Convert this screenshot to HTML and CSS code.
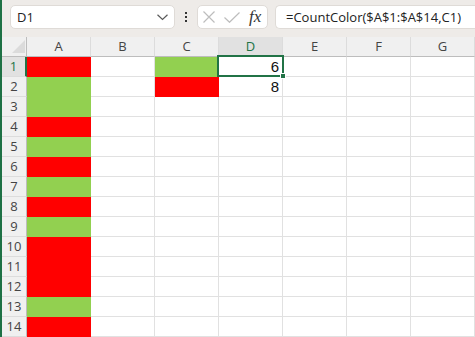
FILE: index.html
```html
<!DOCTYPE html>
<html>
<head>
<meta charset="utf-8">
<link rel="stylesheet" href="styles.css">
</head>
<body>
<div class="app">
  <div class="toolbar">
    <div class="namebox">
      <span class="name">D1</span>
      <svg class="chev" width="11" height="7" viewBox="0 0 11 7"><polyline points="0.5,0.8 5.5,5.5 10.5,0.8" fill="none" stroke="#5a5a5a" stroke-width="1.2"/></svg>
    </div>
    <div class="dots"><i></i><i></i><i></i></div>
    <div class="fxbox">
      <svg class="xicon" width="12" height="12" viewBox="0 0 12 12"><path d="M0.5 0.5 L11.5 11.5 M11.5 0.5 L0.5 11.5" stroke="#bdbdbd" stroke-width="1.2" fill="none"/></svg>
      <svg class="check" width="16" height="11" viewBox="0 0 16 11"><polyline points="0.5,5.5 5.5,10.3 15.5,0.5" stroke="#bdbdbd" stroke-width="1.2" fill="none"/></svg>
      <span class="fx">fx</span>
    </div>
    <div class="formula">=CountColor($A$1:$A$14,C1)</div>
  </div>
  <div class="sheet">
    <div class="corner"><span class="tri"></span></div>
    <div class="colh">A</div>
    <div class="colh">B</div>
    <div class="colh">C</div>
    <div class="colh sel">D</div>
    <div class="colh">E</div>
    <div class="colh">F</div>
    <div class="colh">G</div>

    <div class="rowh sel">1</div><div class="c red"></div><div class="c"></div><div class="c green"></div><div class="c num active">6<span class="selbox"><span class="handle"></span></span></div><div class="c"></div><div class="c"></div><div class="c"></div>
    <div class="rowh">2</div><div class="c green"></div><div class="c"></div><div class="c red"></div><div class="c num">8</div><div class="c"></div><div class="c"></div><div class="c"></div>
    <div class="rowh">3</div><div class="c green"></div><div class="c"></div><div class="c"></div><div class="c"></div><div class="c"></div><div class="c"></div><div class="c"></div>
    <div class="rowh">4</div><div class="c red"></div><div class="c"></div><div class="c"></div><div class="c"></div><div class="c"></div><div class="c"></div><div class="c"></div>
    <div class="rowh">5</div><div class="c green"></div><div class="c"></div><div class="c"></div><div class="c"></div><div class="c"></div><div class="c"></div><div class="c"></div>
    <div class="rowh">6</div><div class="c red"></div><div class="c"></div><div class="c"></div><div class="c"></div><div class="c"></div><div class="c"></div><div class="c"></div>
    <div class="rowh">7</div><div class="c green"></div><div class="c"></div><div class="c"></div><div class="c"></div><div class="c"></div><div class="c"></div><div class="c"></div>
    <div class="rowh">8</div><div class="c red"></div><div class="c"></div><div class="c"></div><div class="c"></div><div class="c"></div><div class="c"></div><div class="c"></div>
    <div class="rowh">9</div><div class="c green"></div><div class="c"></div><div class="c"></div><div class="c"></div><div class="c"></div><div class="c"></div><div class="c"></div>
    <div class="rowh">10</div><div class="c red"></div><div class="c"></div><div class="c"></div><div class="c"></div><div class="c"></div><div class="c"></div><div class="c"></div>
    <div class="rowh">11</div><div class="c red"></div><div class="c"></div><div class="c"></div><div class="c"></div><div class="c"></div><div class="c"></div><div class="c"></div>
    <div class="rowh">12</div><div class="c red"></div><div class="c"></div><div class="c"></div><div class="c"></div><div class="c"></div><div class="c"></div><div class="c"></div>
    <div class="rowh">13</div><div class="c green"></div><div class="c"></div><div class="c"></div><div class="c"></div><div class="c"></div><div class="c"></div><div class="c"></div>
    <div class="rowh">14</div><div class="c red"></div><div class="c"></div><div class="c"></div><div class="c"></div><div class="c"></div><div class="c"></div><div class="c"></div>
  </div>
</div>
</body>
</html>
```
FILE: styles.css
```css
* { box-sizing: border-box; }
html, body { margin: 0; padding: 0; }
body {
  width: 475px;
  height: 337px;
  overflow: hidden;
  font-family: "Open Sans", "Noto Sans", sans-serif;
  background: #fff;
}
.app {
  border-left: 2px solid #1e7145;
  height: 337px;
  width: 475px;
  overflow: hidden;
}
.toolbar {
  height: 37px;
  background: #eeebe8;
  display: flex;
  align-items: flex-start;
  padding-top: 5px;
  padding-left: 8px;
  white-space: nowrap;
}
.namebox {
  width: 165px;
  height: 24px;
  background: #fff;
  border: 1px solid #dfdbd7;
  border-radius: 5px;
  display: flex;
  align-items: center;
  justify-content: space-between;
  padding: 0 6px 0 6px;
}
.name {
  font-size: 13px;
  color: #222;
}
.chev { margin-top: 1px; }
.dots {
  width: 22px;
  height: 24px;
  display: flex;
  flex-direction: column;
  align-items: center;
  justify-content: center;
  gap: 2px;
}
.dots i {
  display: block;
  width: 2px;
  height: 2px;
  background: #333;
}
.fxbox {
  width: 71px;
  height: 24px;
  background: #fff;
  border: 1px solid #dfdbd7;
  border-radius: 5px;
  display: flex;
  align-items: center;
  padding-left: 5px;
}
.check { margin-left: 9px; }
.fx {
  font-family: "Liberation Serif", "DejaVu Serif", serif;
  font-style: italic;
  font-size: 17px;
  color: #333;
  margin-left: 9px;
  line-height: 1;
  margin-top: -2px;
}
.formula {
  margin-left: 7px;
  flex: 1;
  height: 24px;
  background: #fff;
  border: 1px solid #dfdbd7;
  border-right: none;
  border-radius: 5px 0 0 5px;
  font-size: 13px;
  color: #222;
  padding-left: 10px;
  line-height: 22px;
}
.sheet {
  display: grid;
  grid-template-columns: 25px repeat(7, 64px);
  grid-auto-rows: 20px;
}
.corner {
  background: #f0f0f0;
  border-right: 1px solid #bdbdbd;
  border-bottom: 1px solid #bdbdbd;
  position: relative;
}
.tri {
  position: absolute;
  right: 1px;
  bottom: 3px;
  width: 0;
  height: 0;
  border-left: 13px solid transparent;
  border-bottom: 13px solid #dbdbdb;
}
.colh {
  background: #f0f0f0;
  border-right: 1px solid #dcdcdc;
  border-bottom: 1px solid #bdbdbd;
  font-size: 13px;
  color: #444;
  display: flex;
  align-items: center;
  justify-content: center;
  line-height: 1;
}
.colh.sel {
  background: #e1e1e1;
  color: #217346;
  border-bottom: 2px solid #217346;
}
.rowh {
  background: #f0f0f0;
  border-right: 1px solid #bdbdbd;
  border-bottom: 1px solid #dcdcdc;
  font-size: 13px;
  color: #444;
  display: flex;
  align-items: center;
  justify-content: center;
  line-height: 1;
}
.rowh.sel {
  background: #e1e1e1;
  color: #217346;
  border-right: 2px solid #217346;
}
.c {
  border-right: 1px solid #e1e1e1;
  border-bottom: 1px solid #e1e1e1;
  background: #fff;
}
.red { background: #ff0000; border-color: transparent; }
.green { background: #92d050; border-color: transparent; }
.num {
  font-family: "Liberation Sans", Arial, sans-serif;
  font-size: 15px;
  color: #111;
  text-align: right;
  padding-right: 3px;
  line-height: 20px;
}
.active { position: relative; }
.selbox {
  position: absolute;
  left: -2px;
  top: -2px;
  right: -2px;
  bottom: -1px;
  border: 2px solid #217346;
}
.handle {
  position: absolute;
  right: -4px;
  bottom: -4px;
  width: 6px;
  height: 6px;
  background: #217346;
  border: 1px solid #fff;
}
```
